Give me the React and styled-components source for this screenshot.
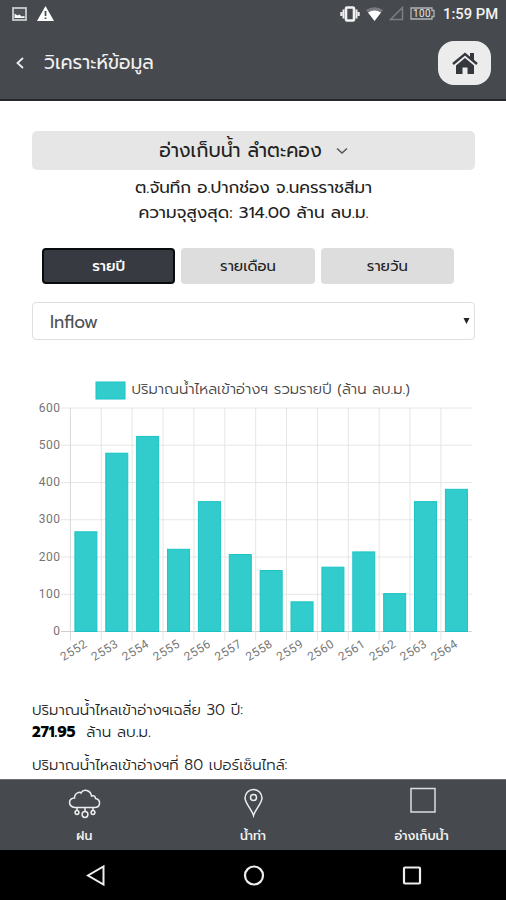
import React from "react";
import styled, { createGlobalStyle } from "styled-components";

const thai = `Prompt, "Noto Sans Thai", "Noto Sans", Loma, Garuda, sans-serif`;

const Global = createGlobalStyle`
  * { box-sizing: border-box; }
  body { margin: 0; background: #fff; font-family: ${thai}; color: #222; }
  button, h1, p { font: inherit; margin: 0; padding: 0; border: 0; }
`;

const Screen = styled.div`
  width: 506px;
  height: 900px;
  display: flex;
  flex-direction: column;
  overflow: hidden;
`;

const Top = styled.header`
  height: 101px;
  flex: none;
  background: #46494e;
  border-bottom: 2px solid #25282c;
`;

const StatusBar = styled.div`
  height: 27px;
  padding: 0 8px 0 12px;
  display: flex;
  align-items: center;
  justify-content: space-between;
  svg { display: block; }
`;

const Group = styled.div`
  display: flex;
  align-items: center;
  gap: ${(p) => p.$gap}px;
`;

const Clock = styled.span`
  font: 500 14.8px/20px Roboto, sans-serif;
  color: #f3f3f3;
  margin-left: 2px;
  width: 55px;
  white-space: nowrap;
`;

const TitleBar = styled.div`
  height: 72px;
  padding: 0 15px;
  display: flex;
  align-items: center;
`;

const Title = styled.h1`
  flex: 1;
  margin-left: 19px;
  color: #f0f0f0;
  line-height: 30px;
`;

const HomeButton = styled.button`
  width: 53px;
  height: 44px;
  border-radius: 16px;
  background: #ececec;
  display: grid;
  place-items: center;
`;

const Label = styled.span`
  white-space: nowrap;
  font-size: ${(p) => p.$size}px;
  font-weight: ${(p) => p.$weight || 400};
`;

const Content = styled.main`
  flex: 1;
  min-height: 0;
  overflow: hidden;
  padding: 30px 31px 0 32px;
`;

const ReservoirPicker = styled.button`
  width: 100%;
  height: 39px;
  border-radius: 5px;
  background: #e6e6e6;
  display: flex;
  align-items: center;
  justify-content: center;
  gap: 14px;
  color: #222;
`;

const Location = styled.div`
  margin-top: 5px;
  display: flex;
  flex-direction: column;
  align-items: center;
  line-height: 25px;
`;

const Periods = styled.div`
  margin: 23px 21px 0 10px;
  display: grid;
  grid-template-columns: repeat(3, 1fr);
  gap: 6px;
`;

const PeriodButton = styled.button`
  height: 36px;
  border-radius: 4px;
  background: ${(p) => (p.$active ? "#373b41" : "#dddddd")};
  border: 2px solid ${(p) => (p.$active ? "#090b0e" : "#dddddd")};
  color: ${(p) => (p.$active ? "#fff" : "#222")};
  line-height: 31px;
`;

const Select = styled.div`
  margin-top: 18px;
  height: 38px;
  border: 1.5px solid #dfdfdf;
  border-radius: 4px;
  padding: 2px 4px 0 17px;
  display: flex;
  align-items: center;
  justify-content: space-between;
  color: #505356;
  svg { margin-bottom: 3px; }
`;

const Chart = styled.svg`
  display: block;
  margin-top: 30px;
  font-family: ${thai};
`;

const Stats = styled.div`
  margin-top: 30px;
  line-height: 22px;
`;

const StatLine = styled.p`
  height: 22px;
  margin-top: ${(p) => p.$top || 0}px;
  display: flex;
  gap: 11px;
  color: #222;
  strong { color: #000; }
`;

const TabBar = styled.nav`
  height: 71px;
  flex: none;
  background: #464a4f;
  border-top: 1px solid #6d7074;
  display: grid;
  grid-template-columns: repeat(3, 1fr);
`;

const Tab = styled.div`
  display: flex;
  flex-direction: column;
  align-items: center;
  padding-top: 4px;
  color: #f2f2f2;
  line-height: 22px;
  svg { display: block; height: 36px; margin-bottom: 5px; }
`;

const SystemNav = styled.div`
  height: 50px;
  flex: none;
  background: #000;
  display: flex;
  justify-content: space-between;
  align-items: center;
  padding: 0 83px 0 84px;
`;

const DATA = [
  [2552, 269], [2553, 480], [2554, 525], [2555, 222], [2556, 350],
  [2557, 208], [2558, 165], [2559, 81], [2560, 174], [2561, 215],
  [2562, 103], [2563, 350], [2564, 383],
];

function YearlyChart() {
  const left = 38.4;
  const right = 439.8;
  const top = 38;
  const bottom = 261.5;
  const step = (right - left) / DATA.length;
  const y = (v) => bottom - (v * (bottom - top)) / 600;
  return (
    <Chart width="443" height="299" viewBox="0 0 443 299">
      <rect x="64" y="12" width="29" height="17" fill="#33cccc" stroke="#19c4c6" />
      <text x="99.500" y="24" fontSize="14.800" fontWeight="300" fill="#444" textLength="278.500" lengthAdjust="spacingAndGlyphs">
        ปริมาณน้ำไหลเข้าอ่างฯ รวมรายปี (ล้าน ลบ.ม.)
      </text>
      {[0, 100, 200, 300, 400, 500, 600].map((v) => (
        <g key={v}>
          <line x1="29" x2={right} y1={y(v)} y2={y(v)} stroke={v ? "#e6e6e6" : "#cfcfcf"} />
          <text x="28.300" y={y(v) + 3.5} fontSize="12" fontFamily="Roboto" fill="#757575" textAnchor="end" letterSpacing="0.4">
            {v}
          </text>
        </g>
      ))}
      {DATA.map(([year], i) => (
        <line key={year} x1={left + i * step} x2={left + i * step} y1={top} y2={bottom + 9} stroke={i ? "#e6e6e6" : "#d8d8d8"} />
      ))}
      {DATA.map(([year, v], i) => (
        <g key={year}>
          <rect x={left + i * step + 4.5} y={y(v) + 0.5} width="22" height={bottom - y(v) - 0.5} fill="#33cccc" stroke="#19c4c6" />
          <text
            transform={`translate(${left + i * step + 17.8} ${bottom + 14.5}) rotate(-32)`}
            fontSize="12"
            fontFamily="Roboto"
            fill="#777"
            textAnchor="end"
            letterSpacing="0.5"
          >
            {year}
          </text>
        </g>
      ))}
    </Chart>
  );
}

const StatusIcons = () => (
  <Group $gap={10}>
    <svg width="15" height="14" viewBox="0 0 15 14">
      <rect x="1" y="1" width="13" height="12" fill="#50545a" stroke="#c9cbcd" strokeWidth="1.800" />
      <path d="M2.500 11V6.500l3 2 2-1 2 2 3-.5v2z" fill="#fff" />
    </svg>
    <svg width="17" height="15" viewBox="0 0 17 15">
      <path d="M8.500 0L17 15H0z" fill="#fff" />
      <path d="M8.500 5v5M8.500 11.400v1.700" stroke="#46494e" strokeWidth="1.700" />
    </svg>
  </Group>
);

const SignalIcons = () => (
  <>
    <svg width="20" height="16" viewBox="0 0 20 16">
      <rect x="6" y="1.500" width="8" height="13" rx="1" fill="#46494e" stroke="#f2f2f2" strokeWidth="2.600" />
      <path d="M3.500 3.500v9M16.500 3.500v9M1.300 6v4M18.700 6v4" stroke="#eee" strokeWidth="2" />
    </svg>
    <svg width="17" height="14" viewBox="0 0 17 14">
      <path d="M0 3Q8.500-2.500 17 3L8.500 14z" fill="#777a7e" />
      <path d="M2 5.500Q8.500 1.500 15 5.500L8.500 14z" fill="#fff" />
    </svg>
    <svg width="15" height="15" viewBox="0 0 15 15">
      <path d="M13.500 1.500v12h-12z" fill="none" stroke="#7c7f83" strokeWidth="1.500" />
    </svg>
    <svg width="25" height="13" viewBox="0 0 25 13">
      <path d="M1 1h21v2.500h2v6h-2V12H1z" fill="none" stroke="#b1b3b5" strokeWidth="1.300" />
      <text x="3" y="10.200" fontSize="10" fontFamily="Roboto" fill="#e3e3e3" textLength="17.500">100</text>
    </svg>
  </>
);

export default function App() {
  return (
    <Screen>
      <Global />
      <Top>
        <StatusBar>
          <StatusIcons />
          <Group $gap={6}>
            <SignalIcons />
            <Clock>1:59 PM</Clock>
          </Group>
        </StatusBar>
        <TitleBar>
          <svg width="10" height="12" viewBox="0 0 10 12">
            <path d="M8 1L2.500 6 8 11" fill="none" stroke="#eee" strokeWidth="1.800" />
          </svg>
          <Title><Label $size={18.9}>วิเคราะห์ข้อมูล</Label></Title>
          <HomeButton aria-label="home">
            <svg width="26" height="22" viewBox="0 0 26 22">
              <path d="M18 1h4v8.500L18 6.500z" fill="#34383d" />
              <path d="M1 12L13 2l12 10" fill="none" stroke="#34383d" strokeWidth="2.300" />
              <path d="M4 13.500L13 6l9 7.500V22h-6.500v-6.500h-5V22H4z" fill="#34383d" />
            </svg>
          </HomeButton>
        </TitleBar>
      </Top>
      <Content>
        <ReservoirPicker>
          <Label $size={19}>อ่างเก็บน้ำ ลำตะคอง</Label>
          <svg width="12" height="8" viewBox="0 0 12 8">
            <path d="M1 1.500l5 4.500 5-4.500" fill="none" stroke="#555" strokeWidth="1.500" />
          </svg>
        </ReservoirPicker>
        <Location>
          <Label $size={16.8}>ต.จันทึก อ.ปากช่อง จ.นครราชสีมา</Label>
          <Label $size={16.85}>ความจุสูงสุด: 314.00 ล้าน ลบ.ม.</Label>
        </Location>
        <Periods>
          <PeriodButton $active><Label $size={14.8} $weight={500}>รายปี</Label></PeriodButton>
          <PeriodButton><Label $size={14.8}>รายเดือน</Label></PeriodButton>
          <PeriodButton><Label $size={14.8}>รายวัน</Label></PeriodButton>
        </Periods>
        <Select>
          <Label $size={17}>Inflow</Label>
          <svg width="7" height="6" viewBox="0 0 7 6"><path d="M.5 0h6L3.500 6z" fill="#222" /></svg>
        </Select>
        <YearlyChart />
        <Stats>
          <StatLine><Label $size={15} $weight={300}>ปริมาณน้ำไหลเข้าอ่างฯเฉลี่ย 30 ปี:</Label></StatLine>
          <StatLine>
            <Label as="strong" $size={15} $weight={700}>271.95</Label>
            <Label $size={15.2} $weight={300}>ล้าน ลบ.ม.</Label>
          </StatLine>
          <StatLine $top={11}><Label $size={15} $weight={300}>ปริมาณน้ำไหลเข้าอ่างฯที่ 80 เปอร์เซ็นไทล์:</Label></StatLine>
        </Stats>
      </Content>
      <TabBar>
        <Tab>
          <svg width="34" height="36" viewBox="0 0 34 36" fill="none" stroke="#eee" strokeWidth="1.500">
            <path d="M8 23.500C.8 22.500.8 14 7.500 14 7.500 8 13.500 8 14 9 16.500 4.500 23.500 6 24.500 12 27.500 11 28.500 13 28.500 14.500c6 1.500 5 9-1 9z" />
            <path d="M10 23.500v3.500M18 23.500v4M26 23.500v3.500" />
            <circle cx="10" cy="28.500" r="1.900" />
            <circle cx="18" cy="30.500" r="2.900" />
            <circle cx="26" cy="28.500" r="1.900" />
          </svg>
          <Label $size={12.4} $weight={500}>ฝน</Label>
        </Tab>
        <Tab>
          <svg width="22" height="36" viewBox="0 0 22 36" fill="none" stroke="#eee" strokeWidth="1.500">
            <path d="M11.500 31.500C10 26 3 19 3 14a8.500 8.500 0 0 1 17 0C20 19 13 26 11.500 31.500z" />
            <circle cx="11.500" cy="13.500" r="3" />
          </svg>
          <Label $size={12.4} $weight={500}>น้ำท่า</Label>
        </Tab>
        <Tab>
          <svg width="30" height="36" viewBox="0 0 30 36">
            <rect x="4" y="4.500" width="24" height="23.500" fill="none" stroke="#ddd" strokeWidth="1.500" />
          </svg>
          <Label $size={12.5} $weight={500}>อ่างเก็บน้ำ</Label>
        </Tab>
      </TabBar>
      <SystemNav>
        <svg width="22" height="22" viewBox="0 0 22 22"><path d="M19.500 2.500v18L4 11.500z" fill="none" stroke="#eee" strokeWidth="2" /></svg>
        <svg width="22" height="22" viewBox="0 0 22 22"><circle cx="11" cy="11.500" r="9" fill="none" stroke="#eee" strokeWidth="2.200" /></svg>
        <svg width="22" height="22" viewBox="0 0 22 22"><rect x="3" y="3.500" width="16" height="16" rx="1" fill="none" stroke="#eee" strokeWidth="2.200" /></svg>
      </SystemNav>
    </Screen>
  );
}
